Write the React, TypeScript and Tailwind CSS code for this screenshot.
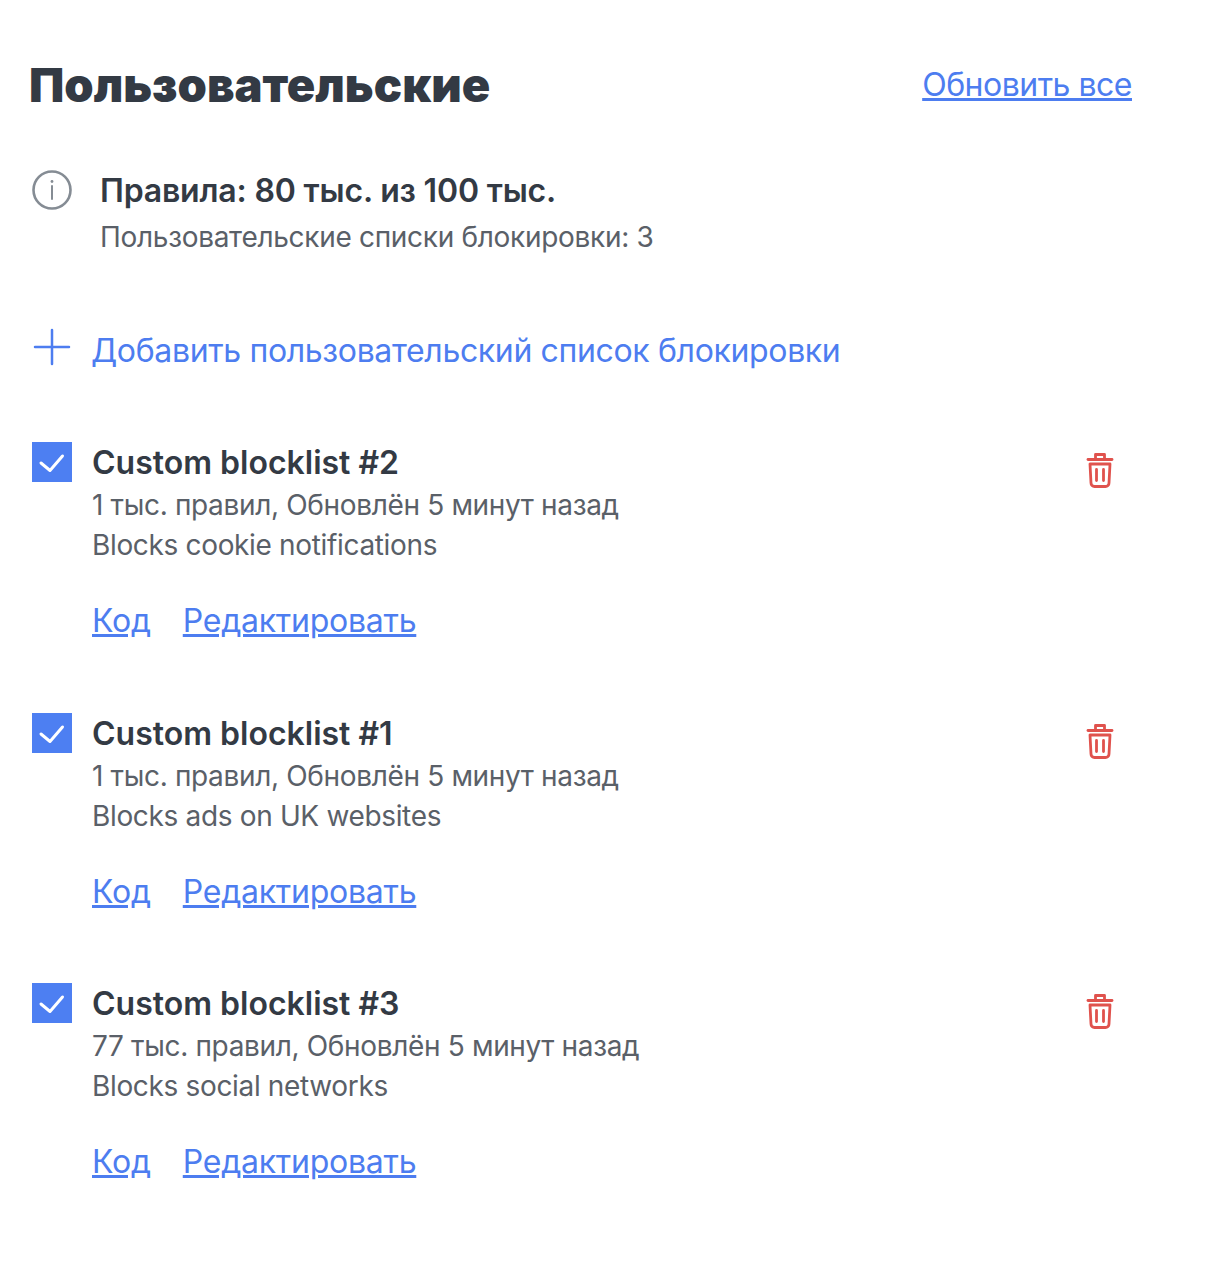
type Blocklist = {
  name: string;
  meta: string;
  description: string;
};

const blocklists: Blocklist[] = [
  { name: "Custom blocklist #2", meta: "1 тыс. правил, Обновлён 5 минут назад", description: "Blocks cookie notifications" },
  { name: "Custom blocklist #1", meta: "1 тыс. правил, Обновлён 5 минут назад", description: "Blocks ads on UK websites" },
  { name: "Custom blocklist #3", meta: "77 тыс. правил, Обновлён 5 минут назад", description: "Blocks social networks" },
];

const linkClass = "text-[#4d7df0] underline";

const InfoIcon = () => (
  <svg className="h-10 w-10 shrink-0 -mt-px" viewBox="0 0 40 40" fill="none">
    <circle cx="20" cy="20" r="18.5" stroke="#858c94" strokeWidth="2.6" />
    <path d="M20 16v13" stroke="#858c94" strokeWidth="2" strokeLinecap="round" />
    <circle cx="20" cy="11.5" r="1.4" fill="#858c94" />
  </svg>
);

const PlusIcon = () => (
  <svg className="h-10 w-10 shrink-0 -mt-1" viewBox="0 0 40 40" fill="none">
    <path d="M20 3v34M3 20h34" stroke="#4d7df0" strokeWidth="2.5" strokeLinecap="round" />
  </svg>
);

const CheckIcon = () => (
  <svg className="h-10 w-10" viewBox="0 0 40 40" fill="none">
    <path d="M9 21l9 7.5L30.5 14" stroke="white" strokeWidth="3" strokeLinecap="round" strokeLinejoin="round" />
  </svg>
);

const TrashIcon = () => (
  <svg className="mt-2 h-10 w-10 shrink-0" viewBox="0 0 40 40" fill="none" stroke="#e0524d" strokeWidth="2.8" strokeLinecap="round" strokeLinejoin="round">
    <path d="M8 9.5h24" />
    <path d="M15.5 9.5V4.5h9v5" />
    <path d="M10 14h20l-1 19a3.5 3.5 0 0 1-3.5 3.5h-11A3.5 3.5 0 0 1 11 33z" />
    <path d="M16.5 19.5v11M23.5 19.5v11" />
  </svg>
);

const BlocklistRow = ({ item }: { item: Blocklist }) => {
  return (
    <div className="flex h-[270.5px] items-start pl-8 pr-[102px]">
      <div className="flex h-10 w-10 shrink-0 items-center justify-center bg-[#4d7ff2]">
        <CheckIcon />
      </div>
      <div className="ml-5 flex-1">
        <div className="pt-px text-[32px] leading-10 font-semibold text-[#333a44]">{item.name}</div>
        <div className="mt-[3px] text-[28px] leading-[39px] tracking-[-0.34px] text-[#5a6068]">{item.meta}</div>
        <div className="mt-px text-[28px] leading-[39px] tracking-[-0.34px] text-[#5a6068]">{item.description}</div>
        <div className="mt-9 flex gap-8 text-[32px] leading-10 tracking-[-0.25px]">
          <span className={linkClass}>Код</span>
          <span className={linkClass}>Редактировать</span>
        </div>
      </div>
      <TrashIcon />
    </div>
  );
};

export default function App() {
  return (
    <div className="min-h-[1286px] bg-white pt-[60px] font-['Inter','Noto_Sans',sans-serif]">
      <div className="flex items-center justify-between pl-[29px] pr-[90px]">
        <h1 className="text-[47px] leading-[50px] font-black text-[#333a44]">Пользовательские</h1>
        <span className={`${linkClass} text-[32px] leading-10 tracking-[-0.5px]`}>Обновить все</span>
      </div>

      <div className="mt-[61px] flex items-start pl-8">
        <InfoIcon />
        <div className="ml-7">
          <div className="text-[32px] leading-10 font-semibold tracking-[-0.18px] text-[#333a44]">Правила: 80 тыс. из 100 тыс.</div>
          <div className="mt-1.5 text-[28px] leading-10 tracking-[-0.3px] text-[#5a6068]">Пользовательские списки блокировки: 3</div>
        </div>
      </div>

      <div className="mt-[74px] flex items-start pl-8 text-[#4d7df0]">
        <PlusIcon />
        <span className="ml-[19px] text-[32px] leading-10 tracking-[-0.35px]">Добавить пользовательский список блокировки</span>
      </div>

      <div className="mt-[71px]">
        {blocklists.map((item) => (
          <BlocklistRow key={item.name} item={item} />
        ))}
      </div>
    </div>
  );
}
